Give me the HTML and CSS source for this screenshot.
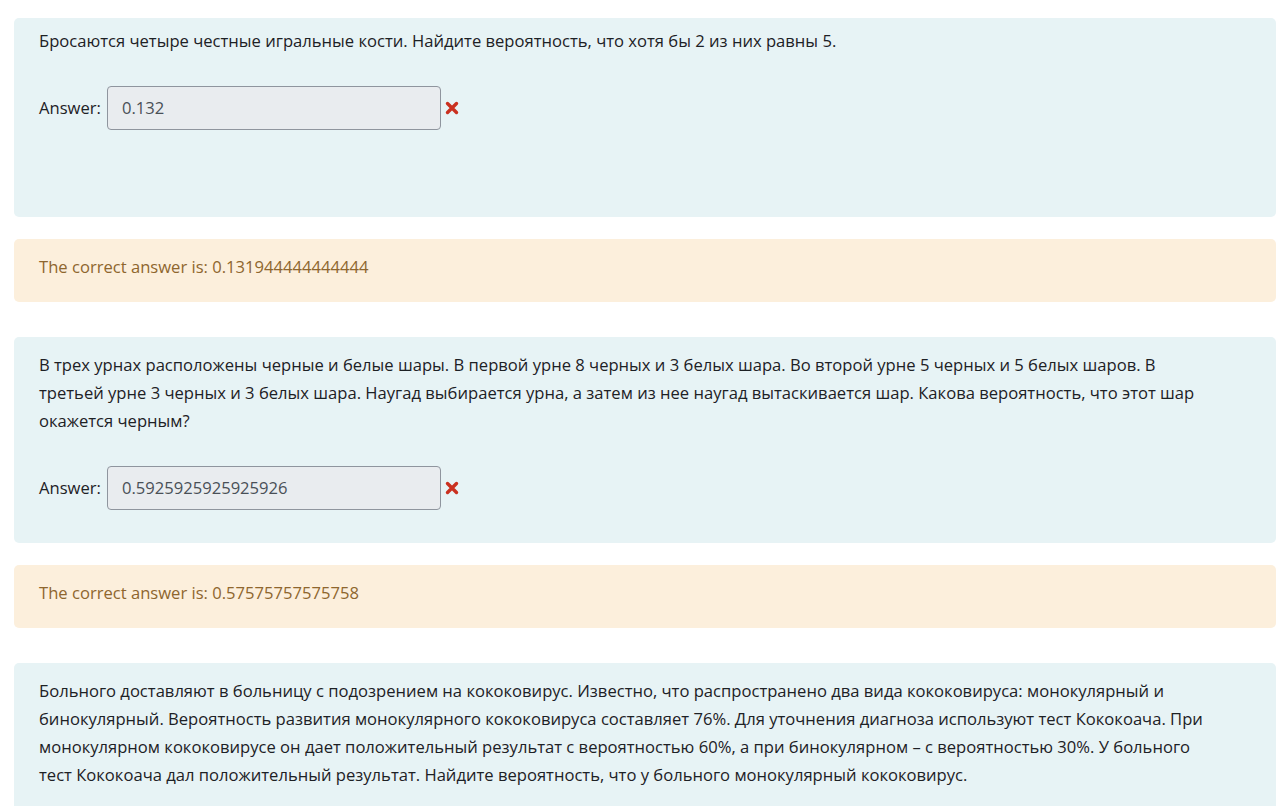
FILE: index.html
```html
<!DOCTYPE html>
<html lang="ru">
<head>
<meta charset="utf-8">
<title>Quiz review</title>
<link rel="stylesheet" href="styles.css">
</head>
<body>
<main class="page">
  <section class="que">
    <div class="formulation first">
      <p class="qtext">Бросаются четыре честные игральные кости. Найдите вероятность, что хотя бы 2 из них равны 5.</p>
      <div class="ablock">
        <label class="alabel">Answer:</label>
        <span class="answer-input">0.132</span>
        <svg class="wrong" viewBox="0 0 14 14" aria-hidden="true"><path d="M2.5 2.5 L11.5 11.5 M11.5 2.5 L2.5 11.5"/></svg>
      </div>
    </div>
    <div class="outcome">The correct answer is: 0.131944444444444</div>
  </section>

  <section class="que">
    <div class="formulation">
      <p class="qtext">В трех урнах расположены черные и белые шары. В первой урне 8 черных и 3 белых шара. Во второй урне 5 черных и 5 белых шаров. В третьей урне 3 черных и 3 белых шара. Наугад выбирается урна, а затем из нее наугад вытаскивается шар. Какова вероятность, что этот шар окажется черным?</p>
      <div class="ablock">
        <label class="alabel">Answer:</label>
        <span class="answer-input">0.5925925925925926</span>
        <svg class="wrong" viewBox="0 0 14 14" aria-hidden="true"><path d="M2.5 2.5 L11.5 11.5 M11.5 2.5 L2.5 11.5"/></svg>
      </div>
    </div>
    <div class="outcome">The correct answer is: 0.57575757575758</div>
  </section>

  <section class="que">
    <div class="formulation">
      <p class="qtext">Больного доставляют в больницу с подозрением на кококовирус. Известно, что распространено два вида кококовируса: монокулярный и бинокулярный. Вероятность развития монокулярного кококовируса составляет 76%. Для уточнения диагноза используют тест Кококоача. При монокулярном кококовирусе он дает положительный результат с вероятностью 60%, а при бинокулярном – с вероятностью 30%. У больного тест Кококоача дал положительный результат. Найдите вероятность, что у больного монокулярный кококовирус.</p>
    </div>
  </section>
</main>
</body>
</html>
```

FILE: styles.css
```css
html, body {
  margin: 0;
  padding: 0;
  background: #ffffff;
}

body {
  font-family: "Open Sans", "Noto Sans", sans-serif;
  font-size: 16.6px;
  line-height: 28px;
  color: #1d2125;
  overflow: hidden;
}

.page {
  padding: 18px 4px 0 14px;
}

.que {
  margin-bottom: 35px;
}

.formulation {
  background: #e7f3f5;
  border-radius: 5px;
  padding: 14px 25px 33px 25px;
}

.formulation.first {
  padding-top: 9px;
  padding-bottom: 87px;
}

.qtext {
  max-width: 1183px;
  margin: 0 0 31px 0;
}

.ablock {
  display: flex;
  align-items: center;
}

.alabel {
  margin-right: 6px;
}

.answer-input {
  box-sizing: border-box;
  width: 334px;
  height: 44px;
  padding: 7px 14px;
  border: 1px solid #8f959e;
  border-radius: 4px;
  background: #e9ecef;
  color: #495057;
  display: flex;
  align-items: center;
}

.wrong {
  width: 14px;
  height: 14px;
  margin-left: 4px;
}

.wrong path {
  stroke: #ca3120;
  stroke-width: 3.4;
  stroke-linecap: round;
  fill: none;
}

.outcome {
  margin-top: 22px;
  background: #fcefdc;
  border-radius: 5px;
  padding: 14px 25px 21px 25px;
  color: #8e662e;
}
```
